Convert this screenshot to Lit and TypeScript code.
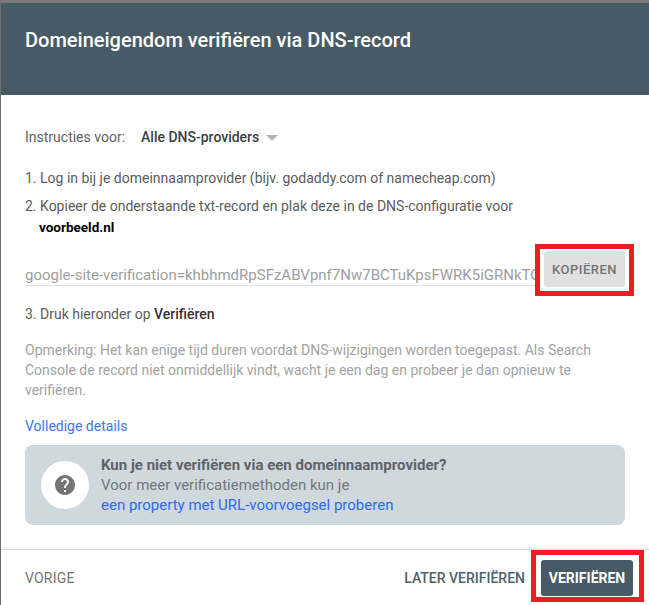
import { LitElement, html, css } from "lit";
import { customElement } from "lit/decorators.js";

@customElement("app-root")
export class AppRoot extends LitElement {
  static styles = css`
    :host {
      display: block;
      width: 649px;
      height: 605px;
      overflow: hidden;
      font-family: Roboto, "Liberation Sans", sans-serif;
      font-size: 14px;
      color: #5f6368;
    }
    .dialog {
      height: 605px;
      box-sizing: border-box;
      border-top: 3px solid #7b7b7b;
      border-left: 1px solid #6e6e6e;
      background: #fff;
      display: flex;
      flex-direction: column;
      position: relative;
    }
    header {
      height: 92px;
      flex: none;
      background: #475a65;
      color: #fff;
      box-sizing: border-box;
      padding: 24px 24px 0;
      font-size: 20px;
      font-weight: 500;
      line-height: 26px;
    }
    main {
      flex: 1;
      padding: 32px 24px 0;
      min-height: 0;
    }
    .instr {
      display: flex;
      align-items: center;
      height: 20px;
      color: #616161;
    }
    .provider {
      margin-left: 16px;
      color: #3c4043;
      font-weight: 500;
    }
    .caret {
      width: 0;
      height: 0;
      margin-left: 7px;
      margin-top: 2px;
      border-left: 6px solid transparent;
      border-right: 6px solid transparent;
      border-top: 6px solid #b5b5b5;
    }
    .step {
      color: #5c5c5c;
      line-height: 20px;
    }
    .s1 {
      margin-top: 21px;
    }
    .s2 {
      margin-top: 8px;
    }
    .domain {
      margin-left: 14px;
      margin-top: 1px;
      line-height: 20px;
      font-size: 13.5px;
      font-weight: 700;
      color: #000;
    }
    .record {
      display: flex;
      align-items: flex-start;
      margin-top: 14px;
      width: 600px;
    }
    .field {
      width: 511px;
      height: 35px;
      box-sizing: border-box;
      padding-top: 9px;
      overflow: hidden;
      white-space: nowrap;
      border-bottom: 1px solid #e0e0e0;
      color: #9e9e9e;
      line-height: 30px;
      font-size: 15px;
    }
    .copy {
      margin-left: 8px;
      width: 81px;
      height: 36px;
      flex: none;
      border: none;
      border-radius: 3px;
      background: #e0e0e0;
      color: #757575;
      font: 500 13px Roboto, sans-serif;
      letter-spacing: 0.5px;
      padding: 0;
    }
    .s3 {
      margin-top: 17px;
    }
    b {
      font-weight: 500;
      color: #333;
    }
    .note {
      margin-top: 16px;
      color: #a3a3a3;
      line-height: 20px;
      width: 590px;
    }
    .details {
      display: block;
      margin-top: 16px;
      line-height: 20px;
      color: #3c78f0;
    }
    .card {
      margin-top: 9px;
      width: 600px;
      height: 80px;
      box-sizing: border-box;
      border-radius: 8px;
      background: #cfd8dc;
      display: flex;
      align-items: center;
      padding-left: 16px;
      gap: 12px;
      font-size: 15px;
      line-height: 20px;
    }
    .circle {
      width: 48px;
      height: 48px;
      border-radius: 50%;
      background: #fff;
      flex: none;
      display: flex;
      align-items: center;
      justify-content: center;
    }
    .card strong {
      display: block;
      font-weight: 700;
      color: #5f6368;
    }
    .card span {
      display: block;
      color: #73787c;
    }
    .card a {
      display: block;
      color: #2f6bf0;
    }
    footer {
      flex: none;
      height: 56px;
      border-top: 1px solid #dcdcdc;
      box-shadow: 0 -1px 3px rgba(0, 0, 0, 0.08);
      display: flex;
      align-items: center;
      padding: 0 16px 0 24px;
      font-size: 14px;
      font-weight: 500;
      box-sizing: border-box;
    }
    .back {
      color: #757575;
      font-weight: 400;
      letter-spacing: 0.2px;
    }
    .later {
      margin-left: auto;
      color: #4f616b;
      font-weight: 500;
    }
    .verify {
      margin-left: 16px;
      width: 92px;
      height: 36px;
      border: none;
      border-radius: 3px;
      background: #475a65;
      color: #fff;
      padding: 0;
      font: 700 14px Roboto, sans-serif;
    }
    .mark {
      position: absolute;
      box-sizing: border-box;
      border: 5px solid #ee1c25;
      pointer-events: none;
    }
    .m1 {
      left: 534px;
      top: 241px;
      width: 99px;
      height: 52px;
    }
    .m2 {
      left: 530px;
      top: 547px;
      width: 113px;
      height: 52px;
    }
  `;

  render() {
    return html`
      <div class="dialog">
        <header>Domeineigendom verifiëren via DNS-record</header>
        <main>
          <div class="instr">
            Instructies voor:
            <span class="provider">Alle DNS-providers</span>
            <span class="caret"></span>
          </div>
          <div class="step s1">1. Log in bij je domeinnaamprovider (bijv. godaddy.com of namecheap.com)</div>
          <div class="step s2">2. Kopieer de onderstaande txt-record en plak deze in de DNS-configuratie voor</div>
          <div class="domain">voorbeeld.nl</div>
          <div class="record">
            <div class="field">google-site-verification=khbhmdRpSFzABVpnf7Nw7BCTuKpsFWRK5iGRNkTQ</div>
            <button class="copy">KOPIËREN</button>
          </div>
          <div class="step s3">3. Druk hieronder op <b>Verifiëren</b></div>
          <div class="note">
            Opmerking: Het kan enige tijd duren voordat DNS-wijzigingen worden toegepast. Als Search
            Console de record niet onmiddellijk vindt, wacht je een dag en probeer je dan opnieuw te
            verifiëren.
          </div>
          <a class="details">Volledige details</a>
          <div class="card">
            <div class="circle">
              <svg width="24" height="24" viewBox="0 0 24 24">
                <path
                  fill="#757575"
                  d="M12 2C6.48 2 2 6.48 2 12s4.48 10 10 10 10-4.48 10-10S17.52 2 12 2zm1 17h-2v-2h2v2zm2.07-7.75l-.9.92C13.45 12.9 13 13.5 13 15h-2v-.5c0-1.1.45-2.1 1.17-2.83l1.24-1.26c.37-.36.59-.86.59-1.41 0-1.1-.9-2-2-2s-2 .9-2 2H8c0-2.21 1.79-4 4-4s4 1.79 4 4c0 .88-.36 1.68-.93 2.25z"
                />
              </svg>
            </div>
            <div>
              <strong>Kun je niet verifiëren via een domeinnaamprovider?</strong>
              <span>Voor meer verificatiemethoden kun je</span>
              <a>een property met URL-voorvoegsel proberen</a>
            </div>
          </div>
        </main>
        <footer>
          <span class="back">VORIGE</span>
          <span class="later">LATER VERIFIËREN</span>
          <button class="verify">VERIFIËREN</button>
        </footer>
        <div class="mark m1"></div>
        <div class="mark m2"></div>
      </div>
    `;
  }
}
